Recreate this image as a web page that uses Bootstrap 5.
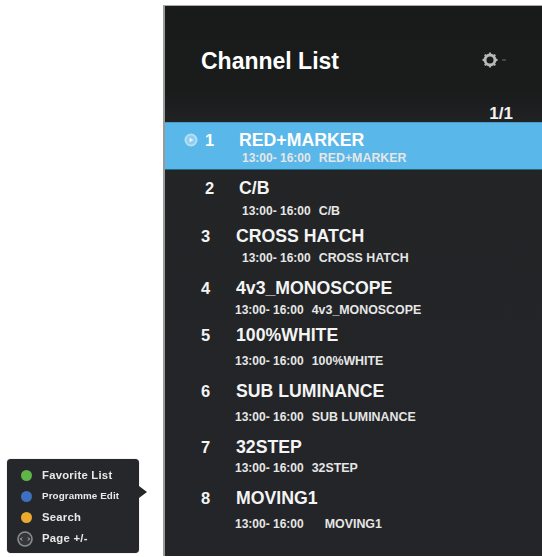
<!DOCTYPE html>
<html lang="en">
<head>
<meta charset="utf-8">
<title>Channel List</title>
<link href="https://cdn.jsdelivr.net/npm/bootstrap@5.3.0/dist/css/bootstrap.min.css" rel="stylesheet">
<style>
html,body{height:557px;overflow:hidden;background:#fff}
body{font-family:"Liberation Sans",Arial,sans-serif;font-weight:700;color:#fff}
.tv-stage{height:557px;filter:blur(.55px)}
.tv-side{width:163px;padding:0 0 4px 7px}
.tv-legend{position:relative;width:132px;height:94px;padding:6px 0 4px 7px;background:#26272a;border-radius:4px;box-shadow:0 0 1px #888}
.tv-legend::after{content:"";position:absolute;left:132px;top:27px;border-left:8px solid #26272a;border-top:6px solid transparent;border-bottom:6px solid transparent}
.tv-key{height:21px;font-size:11.3px;letter-spacing:.25px;color:#e8e8e8}
.tv-key-sm{font-size:9.8px;letter-spacing:.1px}
.tv-slot{width:24px;margin-right:4px}
.tv-dot{width:11px;height:11px;border-radius:50%}
.tv-green{background:#5fb548}.tv-blue{background:#3f6fc0}.tv-amber{background:#eba92e}
.tv-panel{height:551px;margin-top:5px;border-top:1px solid #aaa;border-left:2px solid #9a9a9a;background:linear-gradient(#191a1a 0,#1a1b1b 85px,#222426 125px,#232528 100%)}
.tv-head{padding:41px 34px 0 36px;height:100px}
.tv-title{font-size:23px;line-height:28px}
.tv-page{height:16px;line-height:16px;padding-right:29px;font-size:17px;text-align:right;color:#f2f2f2}
.tv-row{padding:8px 0 0 36px}
.tv-row-on{background:#5ab7e9;height:48px;border-top:1px solid #4a9cc8;border-bottom:1px solid #1c6c86;padding-top:7px}
.tv-line{height:20px;line-height:20px;font-size:17.7px;color:#f4f4f4}
.tv-row-on .tv-line{color:#fff}
.tv-num{width:35px;font-size:16.5px}
.tv-off{padding-left:4px}
.tv-off .tv-num{width:34px}
.tv-play{margin:0 7px 0 -21px}
.tv-sub{height:14px;line-height:14px;font-size:12.4px;gap:8px;color:#e6e6e6;margin-left:34px}
.tv-sub-in{margin-left:41px}
.tv-sub span:first-child{font-size:12px}
.tv-wide{gap:21px}
.tv-g1{margin-top:1px}.tv-g5{margin-top:5px}.tv-g6{margin-top:6px}.tv-g4{margin-top:4px}.tv-g9{margin-top:9px}
.tv-row-tight{padding-top:0}
.tv-s8{margin-top:8px}.tv-s13{margin-top:13px}
</style>
</head>
<body>
<div class="tv-stage d-flex">
  <aside class="tv-side d-flex flex-column justify-content-end flex-shrink-0">
    <div class="tv-legend">
      <div class="tv-key d-flex align-items-center"><span class="tv-slot d-flex justify-content-center"><span class="tv-dot tv-green"></span></span>Favorite List</div>
      <div class="tv-key tv-key-sm d-flex align-items-center"><span class="tv-slot d-flex justify-content-center"><span class="tv-dot tv-blue"></span></span>Programme Edit</div>
      <div class="tv-key d-flex align-items-center"><span class="tv-slot d-flex justify-content-center"><span class="tv-dot tv-amber"></span></span>Search</div>
      <div class="tv-key d-flex align-items-center"><span class="tv-slot d-flex justify-content-center"><svg width="18" height="18" viewBox="0 0 18 18" aria-hidden="true"><circle cx="8" cy="9" r="7" fill="#33363a" stroke="#8a8d8d" stroke-width="1.6"/><path d="M5 7.5 3.5 9 5 10.5M11 7.5 12.5 9 11 10.5" fill="none" stroke="#cfcfcf" stroke-width="1"/></svg></span>Page +/-</div>
    </div>
  </aside>
  <main class="tv-panel flex-grow-1">
    <div class="tv-head d-flex justify-content-between align-items-start">
      <div class="tv-title">Channel List</div>
      <svg class="mt-1" width="26" height="18" viewBox="0 0 26 18" aria-hidden="true"><circle cx="8" cy="9" r="5" fill="none" stroke="#b8b8b8" stroke-width="3"/><path d="M8 1.5v2.500M8 14v2.500M.5 9H3M13 9h2.500M2.700 3.700l1.800 1.800M11.500 12.500l1.800 1.800M2.700 14.300l1.800-1.800M11.500 5.500l1.800-1.800" stroke="#b8b8b8" stroke-width="1.800"/><path d="M20 9h4" stroke="#444" stroke-width="2"/></svg>
    </div>
    <div class="tv-page">1/1</div>
    <div class="tv-row tv-row-on">
      <div class="tv-line tv-off d-flex"><svg class="tv-play align-self-center" width="14" height="14" viewBox="0 0 14 14" aria-hidden="true"><circle cx="7" cy="7" r="5.500" fill="#8ccdf0" stroke="#b4dff5" stroke-width="2"/><path d="M5.500 4.500 9.500 7l-4 2.500z" fill="#e2f3fc"/></svg><span class="tv-num">1</span><span>RED+MARKER</span></div>
      <div class="tv-sub tv-sub-in tv-g1 d-flex"><span>13:00- 16:00</span><span>RED+MARKER</span></div>
    </div>
    <div class="tv-row">
      <div class="tv-line tv-off d-flex"><span class="tv-num">2</span><span>C/B</span></div>
      <div class="tv-sub tv-sub-in tv-g6 d-flex"><span>13:00- 16:00</span><span>C/B</span></div>
    </div>
    <div class="tv-row tv-row-tight tv-s8">
      <div class="tv-line d-flex"><span class="tv-num">3</span><span>CROSS HATCH</span></div>
      <div class="tv-sub tv-sub-in tv-g5 d-flex"><span>13:00- 16:00</span><span>CROSS HATCH</span></div>
    </div>
    <div class="tv-row tv-row-tight tv-s13">
      <div class="tv-line d-flex"><span class="tv-num">4</span><span>4v3_MONOSCOPE</span></div>
      <div class="tv-sub tv-g5 d-flex"><span>13:00- 16:00</span><span>4v3_MONOSCOPE</span></div>
    </div>
    <div class="tv-row tv-row-tight tv-s8">
      <div class="tv-line d-flex"><span class="tv-num">5</span><span>100%WHITE</span></div>
      <div class="tv-sub tv-g9 d-flex"><span>13:00- 16:00</span><span>100%WHITE</span></div>
    </div>
    <div class="tv-row tv-row-tight tv-s13">
      <div class="tv-line d-flex"><span class="tv-num">6</span><span>SUB LUMINANCE</span></div>
      <div class="tv-sub tv-g9 d-flex"><span>13:00- 16:00</span><span>SUB LUMINANCE</span></div>
    </div>
    <div class="tv-row tv-row-tight tv-s13">
      <div class="tv-line d-flex"><span class="tv-num">7</span><span>32STEP</span></div>
      <div class="tv-sub tv-g4 d-flex"><span>13:00- 16:00</span><span>32STEP</span></div>
    </div>
    <div class="tv-row tv-row-tight tv-s13">
      <div class="tv-line d-flex"><span class="tv-num">8</span><span>MOVING1</span></div>
      <div class="tv-sub tv-wide tv-g9 d-flex"><span>13:00- 16:00</span><span>MOVING1</span></div>
    </div>
  </main>
</div>
<script src="https://cdn.jsdelivr.net/npm/bootstrap@5.3.0/dist/js/bootstrap.bundle.min.js"></script>
</body>
</html>
